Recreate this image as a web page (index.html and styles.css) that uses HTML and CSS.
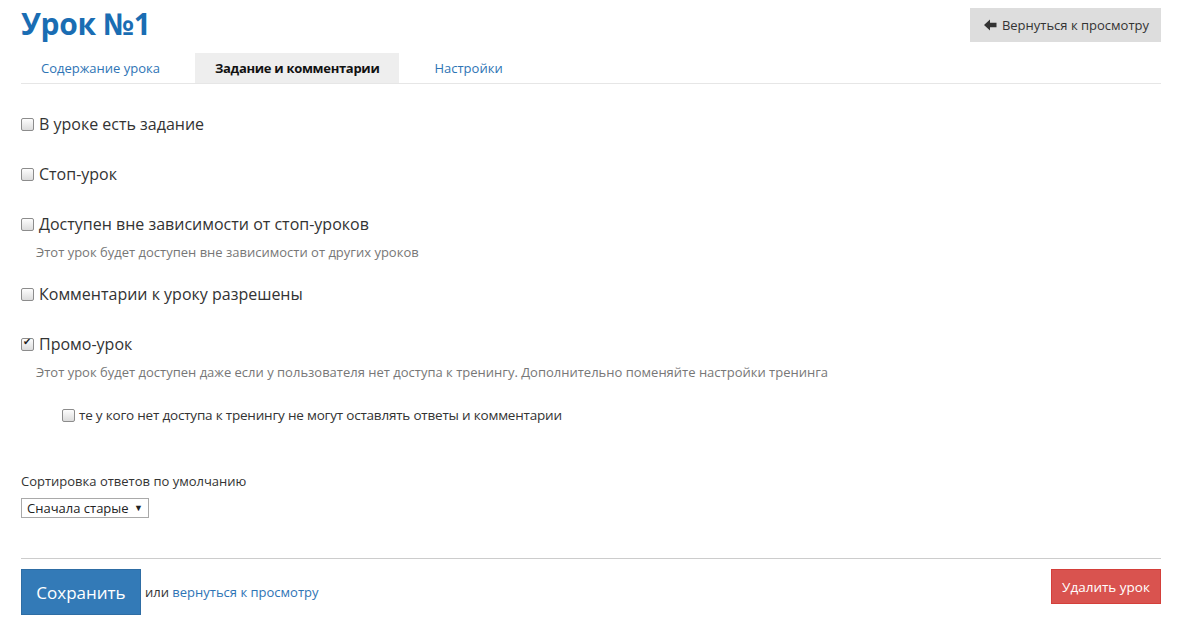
FILE: index.html
```html
<!DOCTYPE html>
<html>
<head>
<meta http-equiv="Content-Type" content="text/html; charset=UTF-8" />
<link rel="stylesheet" href="styles.css">
</head>

<body>

<div id="container">
	<div id="header">
		<h1 id="lesson-title">Урок №1</h1>
		<button id="back-button"><svg width="13" height="12" viewBox="0 0 13 12"><path d="M0 6 L6 0.5 L6 3.8 L12.5 3.8 L12.5 8.2 L6 8.2 L6 11.5 Z" fill="#333"/></svg>Вернуться к просмотру</button>
	</div>

	<div id="tabs">
		<a class="tab">Содержание урока</a>
		<a class="tab active">Задание и комментарии</a>
		<a class="tab">Настройки</a>
	</div>

	<div id="options">
		<div class="option">
			<label><input type="checkbox" /> В уроке есть задание</label>
		</div>
		<div class="option">
			<label><input type="checkbox" /> Стоп-урок</label>
		</div>
		<div class="option with-hint">
			<label><input type="checkbox" /> Доступен вне зависимости от стоп-уроков</label>
			<div class="hint">Этот урок будет доступен вне зависимости от других уроков</div>
		</div>
		<div class="option">
			<label><input type="checkbox" /> Комментарии к уроку разрешены</label>
		</div>
		<div class="option with-hint">
			<label><input type="checkbox" checked /> Промо-урок</label>
			<div class="hint">Этот урок будет доступен даже если у пользователя нет доступа к тренингу. Дополнительно поменяйте настройки тренинга</div>
			<label class="sub-option"><input type="checkbox" /> те у кого нет доступа к тренингу не могут оставлять ответы и комментарии</label>
		</div>
	</div>

	<div id="sort-block">
		<div id="sort-label">Сортировка ответов по умолчанию</div>
		<div id="sort-select">Сначала старые <span class="caret">&#9660;</span></div>
	</div>

	<div id="footer">
		<div id="footer-left">
			<button id="save-button">Сохранить</button>
			<span id="or-text">или <a href="#">вернуться к просмотру</a></span>
		</div>
		<button id="delete-button">Удалить урок</button>
	</div>
</div>

</body>
</html>
```

FILE: styles.css
```css
body {
	margin: 0;
	font-family: "Open Sans", "Liberation Sans", sans-serif;
	font-size: 14px;
	color: #333333;
}

#container {
	width: 1140px;
	margin: 0 0 0 21px;
}

#header {
	display: flex;
	justify-content: space-between;
	align-items: flex-start;
	height: 53px;
}

#lesson-title {
	margin: 4px 0 0 0;
	font-size: 30px;
	line-height: 40px;
	font-weight: 700;
	color: #1a6db3;
	letter-spacing: -0.3px;
}

#back-button {
	margin-top: 8px;
	height: 34px;
	padding: 0 12px 0 14px;
	background-color: #dddddd;
	border: none;
	color: #333333;
	font-family: inherit;
	font-size: 13px;
	display: flex;
	align-items: center;
	gap: 5px;
}

#tabs {
	display: flex;
	border-bottom: 1px solid #e6e6e6;
	height: 30px;
}

.tab {
	padding: 0 20px;
	margin-right: 15px;
	line-height: 30px;
	font-size: 13px;
	color: #2e74b5;
}

.tab.active {
	background-color: #eeeeee;
	color: #111111;
	font-weight: 700;
	letter-spacing: -0.3px;
}

#options {
	padding-top: 29px;
}

.option {
	margin-bottom: 28px;
}

.option.with-hint {
	margin-bottom: 22px;
}

.option label {
	display: flex;
	align-items: center;
	font-size: 16px;
	line-height: 22px;
}

.option input {
	appearance: none;
	-webkit-appearance: none;
	position: relative;
	width: 13px;
	height: 13px;
	margin: 0 5px 0 0;
	border: 1px solid #8c8c8c;
	border-radius: 2px;
	background: linear-gradient(#fdfdfd, #dcdcdc);
}

.option input:checked::after {
	content: "\2714";
	position: absolute;
	left: 1px;
	top: -3px;
	font-size: 10px;
	color: #222222;
}

.hint {
	margin: 8px 0 0 15px;
	font-size: 13px;
	line-height: 18px;
	color: #777777;
}

.option .sub-option {
	margin: 23px 0 0 41px;
	font-size: 13.5px;
	letter-spacing: -0.2px;
}

.sub-option input {
	margin-right: 4px;
}

#sort-block {
	padding-top: 24px;
}

#sort-label {
	font-size: 13px;
	line-height: 18px;
}

#sort-select {
	display: inline-block;
	margin-top: 8px;
	border: 1px solid #a9a9a9;
	padding: 0 5px;
	font-size: 13px;
	line-height: 18px;
	color: #222222;
}

.caret {
	font-size: 9px;
	vertical-align: 2px;
	margin-left: 2px;
}

#footer {
	margin-top: 40px;
	border-top: 1px solid #cccccc;
	padding-top: 10px;
	display: flex;
	justify-content: space-between;
	align-items: flex-start;
}

#footer-left {
	display: flex;
	align-items: center;
}

#save-button {
	width: 120px;
	height: 46px;
	background-color: #337ab7;
	border: 1px solid #2e6da4;
	color: white;
	font-family: inherit;
	font-size: 17px;
	margin-right: 4px;
}

#or-text {
	font-size: 13px;
}

#or-text a {
	color: #2e74b5;
	text-decoration: none;
}

#delete-button {
	width: 110px;
	height: 35px;
	background-color: #d9534f;
	border: 1px solid #d43f3a;
	color: white;
	font-family: inherit;
	font-size: 13.5px;
}
```
